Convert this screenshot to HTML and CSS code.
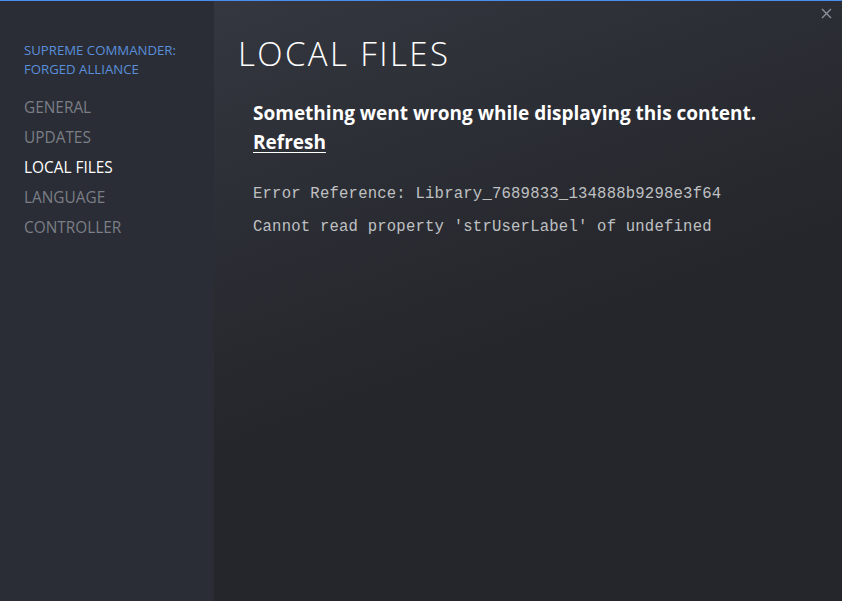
FILE: index.html
```html
<!DOCTYPE html>
<html lang="en">
<head>
    <meta charset="UTF-8">
    <meta name="viewport" content="width=device-width, initial-scale=1.0">
    <title>Local Files</title>
    <link rel="stylesheet" href="styles.css">
</head>
<body>
    <div class="window">
        <aside class="sidebar">
            <div class="game-title">SUPREME COMMANDER:<br>FORGED ALLIANCE</div>
            <nav class="nav">
                <a class="nav-item">GENERAL</a>
                <a class="nav-item">UPDATES</a>
                <a class="nav-item active">LOCAL FILES</a>
                <a class="nav-item">LANGUAGE</a>
                <a class="nav-item">CONTROLLER</a>
            </nav>
        </aside>
        <main class="content">
            <h1 class="page-title">LOCAL FILES</h1>
            <div class="error-box">
                <div class="error-head">Something went wrong while displaying this content.</div>
                <a class="refresh">Refresh</a>
                <div class="error-code">Error Reference: Library_7689833_134888b9298e3f64</div>
                <div class="error-code">Cannot read property 'strUserLabel' of undefined</div>
            </div>
            <button class="close" aria-label="Close">
                <svg width="11" height="11" viewBox="0 0 11 11">
                    <path d="M1 1 L10 10 M10 1 L1 10" stroke="#8c9098" stroke-width="1.4"/>
                </svg>
            </button>
        </main>
    </div>
</body>
</html>
```

FILE: styles.css
```css
html, body {
    margin: 0;
    height: 100%;
}
body {
    font-family: "Open Sans", Arial, sans-serif;
    background: #25262b;
}
.window {
    display: flex;
    height: 100%;
    border-top: 1px solid #4c8ef0;
    box-sizing: border-box;
}
.sidebar {
    width: 214px;
    flex-shrink: 0;
    background: #2a2d36;
    padding: 40px 0 0 24px;
    box-sizing: border-box;
}
.game-title {
    color: #5a8fda;
    font-size: 13.2px;
    line-height: 19px;
    margin-bottom: 14px;
}
.nav {
    display: flex;
    flex-direction: column;
}
.nav-item {
    color: #7b7e85;
    font-size: 15.4px;
    line-height: 30px;
}
.nav-item.active {
    color: #ffffff;
}
.content {
    position: relative;
    flex: 1;
    padding: 31px 0 0 24px;
    background: linear-gradient(160deg, #34373f 0%, #2b2d34 30%, #25262b 55%);
}
.page-title {
    margin: 0 0 23px;
    color: #ffffff;
    font-size: 33px;
    font-weight: 300;
    letter-spacing: 2.4px;
    line-height: 44px;
}
.error-box {
    padding-left: 15px;
}
.error-head {
    color: #ffffff;
    font-size: 19px;
    font-weight: 700;
    line-height: 29px;
}
.refresh {
    display: inline-block;
    color: #ffffff;
    font-size: 19px;
    font-weight: 700;
    line-height: 29px;
    text-decoration: underline;
    text-underline-offset: 3px;
    margin-bottom: 27px;
}
.error-code {
    font-family: "Liberation Mono", "Courier New", monospace;
    font-size: 15.6px;
    letter-spacing: 0.2px;
    color: #bfc0c2;
    line-height: 20px;
    margin-bottom: 13px;
}
.close {
    position: absolute;
    top: 6px;
    right: 10px;
    background: none;
    border: none;
    padding: 0;
    cursor: pointer;
}
```
